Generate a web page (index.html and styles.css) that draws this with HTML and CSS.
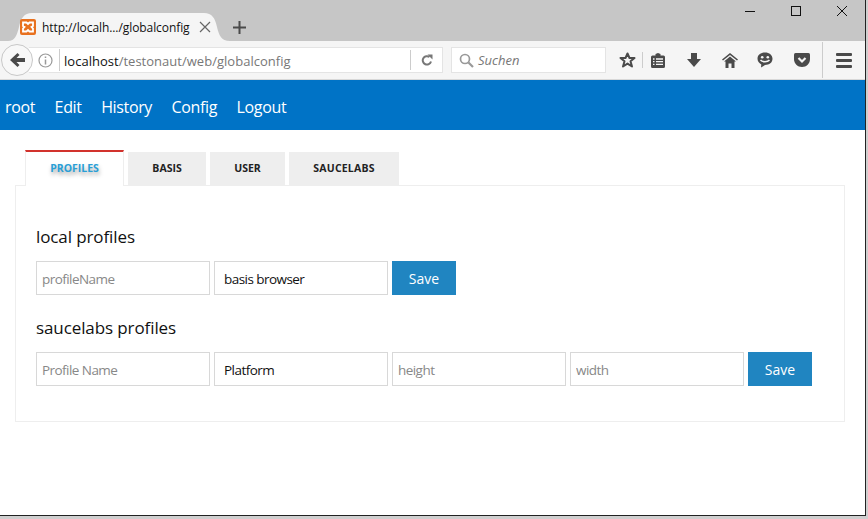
FILE: index.html
```html
<!DOCTYPE html>
<html>
<head>
    <meta charset="UTF-8" />
    <title>Testonaut</title>
    <link rel="stylesheet" href="styles.css">
</head>
<body>
<div class="window">
    <div class="titlebar">
        <div class="tab">
            <svg class="tab-shape" width="222" height="28" viewBox="0 0 222 28"><path d="M0 28C7 28 9 22 11 14C13 5 16 0 24 0H196C204 0 207 5 209 14C211 22 213 28 222 28Z" fill="#f5f5f5"/></svg>
            <svg class="favicon" width="16" height="16" viewBox="0 0 16 16"><rect width="16" height="16" rx="2" fill="#e8711f"/><path d="M3 3.500H6.500L8 5L9.500 3.500H13V7L11.500 8L13 9.500V12.500H9.500L8 11L6.500 12.500H3V9.500L4.500 8L3 7Z" fill="none" stroke="#fff" stroke-width="1.800"/></svg>
            <span class="tab-title">http://localh.../globalconfig</span>
            <svg class="tab-close" width="12" height="12" viewBox="0 0 12 12"><path d="M1 1L11 11M11 1L1 11" stroke="#666" stroke-width="1.200"/></svg>
        </div>
        <svg class="newtab" width="13" height="13" viewBox="0 0 13 13"><path d="M6.500 0V13M0 6.500H13" stroke="#4a4a4a" stroke-width="2"/></svg>
        <div class="winbtns">
            <svg width="10" height="10" viewBox="0 0 10 10"><path d="M0 5.500H10" stroke="#111" stroke-width="1"/></svg>
            <svg width="10" height="10" viewBox="0 0 10 10"><rect x=".5" y=".5" width="9" height="9" fill="none" stroke="#111"/></svg>
            <svg width="10" height="10" viewBox="0 0 10 10"><path d="M0 0L10 10M10 0L0 10" stroke="#111" stroke-width="1"/></svg>
        </div>
    </div>

    <div class="toolbar">
        <div class="back">
            <svg width="15" height="14" viewBox="0 0 15 14"><path d="M7.500 0L9.500 2L6.500 5H15V9H6.500L9.500 12L7.500 14L0 7Z" fill="#4a4a4a"/></svg>
        </div>
        <div class="urlbar">
            <svg class="info" width="15" height="15" viewBox="0 0 15 15"><circle cx="7.500" cy="7.500" r="6.500" fill="none" stroke="#999" stroke-width="1.200"/><path d="M7.500 6.500V11.500M7.500 3.500V5" stroke="#999" stroke-width="1.500"/></svg>
            <span class="url"><b>localhost</b>/testonaut/web/globalconfig</span>
            <span class="reload">
                <svg width="12" height="12" viewBox="0 0 12 12"><path d="M10 7.500A4.200 4.200 0 1 1 8.500 3" fill="none" stroke="#777" stroke-width="2"/><path d="M6.500 0.500H11.500V5.500Z" fill="#777"/></svg>
            </span>
        </div>
        <div class="searchbar">
            <svg width="15" height="15" viewBox="0 0 15 15"><circle cx="6" cy="6" r="4.500" fill="none" stroke="#999" stroke-width="1.700"/><path d="M9.500 9.500L14 14" stroke="#999" stroke-width="2.200"/></svg>
            <span>Suchen</span>
        </div>
        <div class="tools">
            <svg class="star" width="17" height="16" viewBox="0 0 17 16"><path d="M8.500 1.500L10.500 6H15.500L11.500 9.300L13 14.500L8.500 11.600L4 14.500L5.500 9.300L1.500 6H6.500Z" fill="none" stroke="#4a4a4a" stroke-width="2" stroke-linejoin="round"/></svg>
            <i class="sep"></i>
            <svg class="list" width="14" height="15" viewBox="0 0 14 15"><path d="M1.500 2.500H4.500V1L7 0L9.500 1V2.500H12.500Q14 2.500 14 4V13.500Q14 15 12.500 15H1.500Q0 15 0 13.500V4Q0 2.500 1.500 2.500Z" fill="#4a4a4a"/><path d="M2 6H3.500M5 6H12M2 8.700H3.500M5 8.700H12M2 11.400H3.500M5 11.400H12" stroke="#f5f5f5" stroke-width="1.300"/></svg>
            <svg class="down" width="14" height="14" viewBox="0 0 14 14"><path d="M4 0H10V6H14L7 14L0 6H4Z" fill="#4a4a4a"/></svg>
            <svg class="home" width="16" height="15" viewBox="0 0 16 15"><path d="M8 0L16 6.500L15 7.500L8 2L1 7.500L0 6.500Z" fill="#4a4a4a"/><path d="M8 3.500L14 8.500H12.500V15H9.500V10.500H6.500V15H3.500V8.500H2Z" fill="#4a4a4a"/></svg>
            <svg class="hello" width="16" height="16" viewBox="0 0 16 16"><path d="M8 0.500C12.400 0.500 15.500 3 15.500 6.800C15.500 10.600 12.400 13 8 13L4 15.500L4.300 12.400C2 11.300 0.500 9.300 0.500 6.800C0.500 3 3.600 0.500 8 0.500Z" fill="#4a4a4a"/><circle cx="5.200" cy="5.300" r="1.300" fill="#f5f5f5"/><circle cx="10.800" cy="5.300" r="1.300" fill="#f5f5f5"/><path d="M3.500 8C5.500 10.300 10.500 10.300 12.500 8" fill="none" stroke="#f5f5f5" stroke-width="1.500"/></svg>
            <svg class="pocket" width="16" height="14" viewBox="0 0 16 14"><path d="M1.500 0H14.500Q16 0 16 1.500V6C16 10.500 12.500 14 8 14C3.500 14 0 10.500 0 6V1.500Q0 0 1.500 0Z" fill="#4a4a4a"/><path d="M4.500 5L8 8.500L11.500 5" fill="none" stroke="#f5f5f5" stroke-width="2.200"/></svg>
            <i class="sep tall"></i>
            <div class="burger"><i></i><i></i><i></i></div>
        </div>
    </div>

    <nav class="mainnav">
        <a href="#">root</a>
        <a href="#">Edit</a>
        <a href="#">History</a>
        <a href="#">Config</a>
        <a href="#">Logout</a>
    </nav>

    <div class="content">
        <ul class="tabs">
            <li class="active"><a href="#">PROFILES</a></li>
            <li class="basis"><a href="#">BASIS</a></li>
            <li class="user"><a href="#">USER</a></li>
            <li class="sauce"><a href="#">SAUCELABS</a></li>
        </ul>
        <div class="panel">
            <h3>local profiles</h3>
            <form class="row">
                <input type="text" placeholder="profileName" />
                <div class="fake-select">basis browser</div>
                <button type="button">Save</button>
            </form>
            <h3>saucelabs profiles</h3>
            <form class="row">
                <input type="text" placeholder="Profile Name" />
                <div class="fake-select">Platform</div>
                <input type="text" placeholder="height" />
                <input type="text" placeholder="width" />
                <button type="button">Save</button>
            </form>
        </div>
    </div>
</div>
</body>
</html>
```

FILE: styles.css
```css
html, body{
    margin:0;
    height:100%;
    background:#cfcfcf;
    overflow:hidden;
}
.window{
    width:865px;
    height:515px;
    background:#fff;
    border-right:1px solid #222;
    border-bottom:1px solid #222;
    font-family:"Open Sans", "Noto Sans", sans-serif;
    overflow:hidden;
}

/* browser title bar */
.titlebar{
    height:41px;
    background:#c6c6c6;
    display:flex;
    align-items:flex-end;
}
.tab{
    position:relative;
    width:222px;
    height:28px;
    margin-left:8px;
    display:flex;
    align-items:center;
    font-size:12px;
    color:#111;
}
.tab-shape{
    position:absolute;
    left:0;
    top:0;
}
.favicon{
    position:relative;
    margin-left:12px;
}
.tab-title{
    position:relative;
    margin-left:6px;
    width:148px;
    white-space:nowrap;
    letter-spacing:-0.08px;
}
.tab-close{
    position:relative;
    margin-left:9px;
}
.newtab{
    margin:0 0 7px 3px;
}
.winbtns{
    margin-left:auto;
    align-self:flex-start;
    display:flex;
    gap:36px;
    padding:6px 18px 0 0;
}

/* toolbar */
.toolbar{
    height:38px;
    box-sizing:content-box;
    background:#f5f5f5;
    border-bottom:1px solid #d8d8d8;
    display:flex;
    align-items:center;
}
.back{
    width:30px;
    height:30px;
    margin-left:1px;
    border:1px solid #c8c8c8;
    border-radius:50%;
    background:#f8f8f8;
    display:flex;
    align-items:center;
    justify-content:center;
    position:relative;
    z-index:1;
    flex:none;
}
.urlbar{
    width:414px;
    height:26px;
    margin-left:-4px;
    padding-left:9px;
    box-sizing:border-box;
    background:#fff;
    border:1px solid #e4e4e4;
    border-left:0;
    display:flex;
    align-items:center;
}
.info{
    flex:none;
}
.url{
    margin-left:6px;
    padding-left:4px;
    border-left:1px solid #ccc;
    width:346px;
    font-size:13px;
    line-height:22px;
    padding-top:1px;
    height:21px;
    color:#777;
    white-space:nowrap;
    letter-spacing:0.02px;
}
.url b{
    font-weight:normal;
    color:#111;
}
.reload{
    height:20px;
    border-left:1px solid #ccc;
    padding-left:10px;
    display:flex;
    align-items:center;
}
.searchbar{
    width:155px;
    height:26px;
    margin-left:8px;
    padding-left:7px;
    box-sizing:border-box;
    background:#fff;
    border:1px solid #e4e4e4;
    display:flex;
    align-items:center;
    gap:4px;
    font-size:13px;
    font-style:italic;
    color:#777;
}
.tools{
    display:flex;
    align-items:center;
    margin-left:13px;
    flex:1;
    height:38px;
}
.sep{
    width:1px;
    height:16px;
    margin-left:6px;
    background:#ccc;
}
.sep.tall{
    height:36px;
    margin-left:12px;
}
.list{
    margin-left:8px;
}
.down{
    margin-left:22px;
}
.home{
    margin-left:21px;
}
.hello{
    margin-left:19px;
}
.pocket{
    margin-left:21px;
}
.burger{
    margin-left:13px;
    width:16px;
    display:flex;
    flex-direction:column;
    gap:3px;
}
.burger i{
    height:3px;
    background:#4a4a4a;
    border-radius:1px;
}

/* site navigation */
.mainnav{
    height:47px;
    padding:3px 0 0 5px;
    background:#0073c6;
    display:flex;
    align-items:center;
    gap:19.500px;
}
.mainnav a{
    color:#fff;
    text-decoration:none;
    font-size:16px;
    letter-spacing:-0.35px;
}

/* tabs + panel */
.content{
    padding:20px 0 0 15px;
}
.tabs{
    list-style:none;
    margin:0 0 0 10px;
    padding:0;
    display:flex;
    align-items:flex-end;
    gap:4px;
    height:36px;
    position:relative;
    z-index:1;
}
.tabs li{
    height:33px;
    box-sizing:border-box;
    padding-bottom:1px;
    background:#eee;
    display:flex;
    align-items:center;
    justify-content:center;
    margin-bottom:1px;
}
.tabs a{
    font-size:10.500px;
    font-weight:bold;
    color:#222;
    text-decoration:none;
}
.tabs .active{
    width:99px;
    height:36px;
    margin-bottom:0;
    padding-bottom:2px;
    background:#fff;
    border-top:2px solid #d2322d;
    border-left:1px solid #eee;
    border-right:1px solid #eee;
}
.tabs .active a{
    color:#2a9fd6;
    text-shadow:1px 3px 4px rgba(0,0,0,.35);
}
.tabs .basis{
    width:78px;
}
.tabs .user{
    width:75px;
}
.tabs .sauce{
    width:110px;
}
.tabs .sauce a{
    letter-spacing:.2px;
}
.panel{
    width:830px;
    height:237px;
    margin-top:-1px;
    padding:39px 20px 0;
    box-sizing:border-box;
    border:1px solid #eee;
}
.panel h3{
    margin:0;
    font-size:17px;
    font-weight:normal;
    line-height:24px;
    letter-spacing:-0.1px;
    color:#111;
}
.row{
    display:flex;
    gap:4px;
    margin:12px 0 21px;
}
.row input, .fake-select{
    width:174px;
    height:34px;
    box-sizing:border-box;
    border:1px solid #d8d8d8;
    padding:1px 5px 0;
    font-family:inherit;
    font-size:13.500px;
    letter-spacing:-0.55px;
    color:#111;
    outline:none;
}
.row input::placeholder{
    color:#888;
    opacity:1;
}
.fake-select{
    padding:0 0 0 9px;
    line-height:34px;
}
.row button{
    width:64px;
    height:34px;
    border:0;
    background:#2085c1;
    color:#fff;
    font-family:inherit;
    font-size:14px;
}
```
